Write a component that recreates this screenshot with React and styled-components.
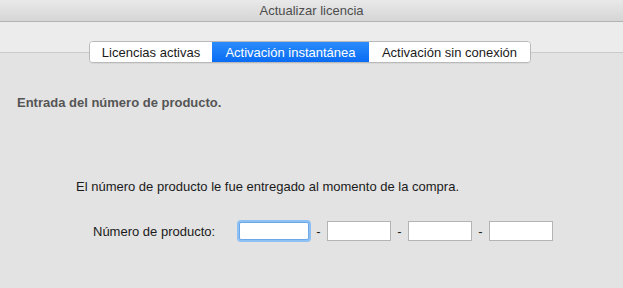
import React from 'react'
import styled, { createGlobalStyle } from 'styled-components'

const GlobalStyle = createGlobalStyle`
  html, body {
    margin: 0;
    padding: 0;
    background: #e3e3e3;
  }
  body {
    font-family: "Liberation Sans", Arial, sans-serif;
    font-size: 13px;
  }
`

const Window = styled.div`
  width: 623px;
  height: 288px;
  display: flex;
  flex-direction: column;
  background: #e3e3e3;
  overflow: hidden;
`

const TitleBar = styled.div`
  height: 21px;
  display: flex;
  align-items: center;
  justify-content: center;
  background: linear-gradient(#e9e9e9, #d5d5d5);
  border-bottom: 1px solid #b3b3b3;
  color: #4d4d4d;
  font-size: 13px;
`

const Toolbar = styled.div`
  height: 30px;
  display: flex;
  align-items: flex-end;
  justify-content: center;
  background: #ececec;
  border-bottom: 1px solid #cacaca;
`

const TabGroup = styled.div`
  display: flex;
  margin: 0 3px -11px 0;
  border: 1px solid #b9b9b9;
  border-radius: 4px;
  background: #fff;
  overflow: hidden;
  box-shadow: 0 1px 0 rgba(0, 0, 0, 0.05);
`

const Tab = styled.div`
  height: 20px;
  width: ${p => p.$w}px;
  display: flex;
  align-items: center;
  justify-content: center;
  font-size: 13px;
  color: ${p => (p.$active ? '#fff' : '#1a1a1a')};
  background: ${p => (p.$active ? 'linear-gradient(#2a8cfb, #0a6cf4)' : '#fff')};
`

const Content = styled.div`
  flex: 1;
  display: flex;
  flex-direction: column;
  padding: 42px 0 0 17px;
`

const Heading = styled.div`
  font-weight: bold;
  color: #555;
  font-size: 13px;
`

const Note = styled.div`
  margin: 69px 0 0 59px;
  color: #1a1a1a;
`

const FieldRow = styled.div`
  display: flex;
  align-items: center;
  margin: 26px 0 0 76px;
  color: #1a1a1a;
`

const Label = styled.span`
  width: 144px;
`

const Segment = styled.div`
  width: ${p => (p.$focus ? 68 : 62)}px;
  height: ${p => (p.$focus ? 16 : 18)}px;
  background: #fff;
  border: 1px solid ${p => (p.$focus ? '#6aa8ea' : '#b4b4b4')};
  box-shadow: ${p => (p.$focus ? '0 0 0 2px #8fc0f3' : 'none')};
  border-radius: ${p => (p.$focus ? '2px' : '0')};
  margin: ${p => (p.$focus ? '2px 1px 2px 2px' : '0')};
`

const Dash = styled.span`
  width: 17px;
  text-align: center;
`

export default function App() {
  return (
    <Window>
      <GlobalStyle />
      <TitleBar>Actualizar licencia</TitleBar>
      <Toolbar>
        <TabGroup>
          <Tab $w={122}>Licencias activas</Tab>
          <Tab $w={157} $active>Activación instantánea</Tab>
          <Tab $w={161}>Activación sin conexión</Tab>
        </TabGroup>
      </Toolbar>
      <Content>
        <Heading>Entrada del número de producto.</Heading>
        <Note>El número de producto le fue entregado al momento de la compra.</Note>
        <FieldRow>
          <Label>Número de producto:</Label>
          <Segment $focus />
          <Dash>-</Dash>
          <Segment />
          <Dash>-</Dash>
          <Segment />
          <Dash>-</Dash>
          <Segment />
        </FieldRow>
      </Content>
    </Window>
  )
}
